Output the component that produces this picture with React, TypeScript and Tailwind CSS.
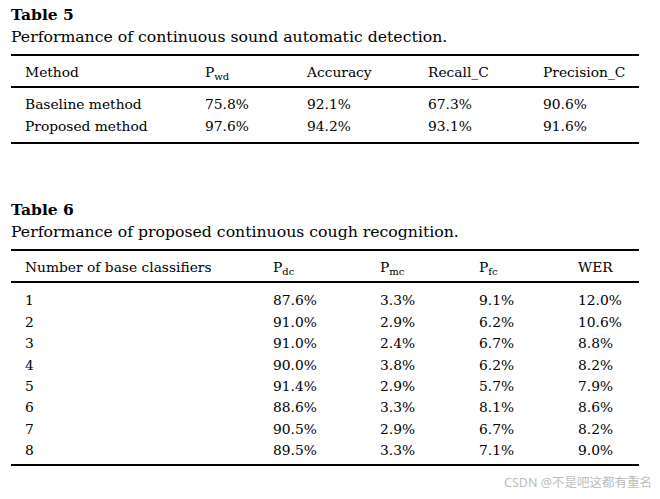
const serif = { fontFamily: '"DejaVu Serif", "Liberation Serif", serif' };

const table5 = [
  ["Baseline method", "75.8%", "92.1%", "67.3%", "90.6%"],
  ["Proposed method", "97.6%", "94.2%", "93.1%", "91.6%"],
];

const table6 = [
  ["1", "87.6%", "3.3%", "9.1%", "12.0%"],
  ["2", "91.0%", "2.9%", "6.2%", "10.6%"],
  ["3", "91.0%", "2.4%", "6.7%", "8.8%"],
  ["4", "90.0%", "3.8%", "6.2%", "8.2%"],
  ["5", "91.4%", "2.9%", "5.7%", "7.9%"],
  ["6", "88.6%", "3.3%", "8.1%", "8.6%"],
  ["7", "90.5%", "2.9%", "6.7%", "8.2%"],
  ["8", "89.5%", "3.3%", "7.1%", "9.0%"],
];

const P = ({ sub }: { sub: string }) => (
  <span>
    P<span className="text-[10px] relative top-[3px]">{sub}</span>
  </span>
);

export default function App() {
  return (
    <div
      className="w-[660px] h-[499px] bg-white text-black relative overflow-hidden pl-[11px] pr-[21px] pt-[4px]"
      style={serif}
    >
      <div className="text-[15.5px] font-bold leading-[21px]">Table 5</div>
      <div className="text-[15.7px] leading-[24px]">
        Performance of continuous sound automatic detection.
      </div>
      <div className="mt-[5px] border-t-2 border-b-2 border-black text-[13.8px]">
        <div className="grid grid-cols-[180px_102px_121px_115px_1fr] pl-[14px] h-[32px] items-center pt-[2px] border-b-2 border-black">
          <div>Method</div>
          <div>
            <P sub="wd" />
          </div>
          <div>Accuracy</div>
          <div>Recall_C</div>
          <div>Precision_C</div>
        </div>
        <div className="pt-[6px] pb-[5px]">
          {table5.map((r) => (
            <div
              key={r[0]}
              className="grid grid-cols-[180px_102px_121px_115px_1fr] pl-[14px] h-[21.5px] items-center"
            >
              {r.map((c, i) => (
                <div key={i}>{c}</div>
              ))}
            </div>
          ))}
        </div>
      </div>

      <div className="mt-[55px] text-[15.5px] font-bold leading-[21px]">Table 6</div>
      <div className="text-[15.7px] leading-[24px]">
        Performance of proposed continuous cough recognition.
      </div>
      <div className="mt-[5px] border-t-2 border-b-2 border-black text-[13.8px]">
        <div className="grid grid-cols-[248px_107px_99px_99px_1fr] pl-[14px] h-[32px] items-center pt-[3px] border-b-2 border-black">
          <div>Number of base classifiers</div>
          <div>
            <P sub="dc" />
          </div>
          <div>
            <P sub="mc" />
          </div>
          <div>
            <P sub="fc" />
          </div>
          <div>WER</div>
        </div>
        <div className="pt-[7px] pb-[3px]">
          {table6.map((r) => (
            <div
              key={r[0]}
              className="grid grid-cols-[248px_107px_99px_99px_1fr] pl-[14px] h-[21.4px] items-center"
            >
              {r.map((c, i) => (
                <div key={i}>{c}</div>
              ))}
            </div>
          ))}
        </div>
      </div>

      <div
        className="absolute right-[8px] bottom-[6px] text-[12.5px] text-[#bdbdbd]"
        style={{ fontFamily: '"Noto Sans", "Noto Sans CJK SC", sans-serif' }}
      >
        CSDN @不是吧这都有重名
      </div>
    </div>
  );
}
